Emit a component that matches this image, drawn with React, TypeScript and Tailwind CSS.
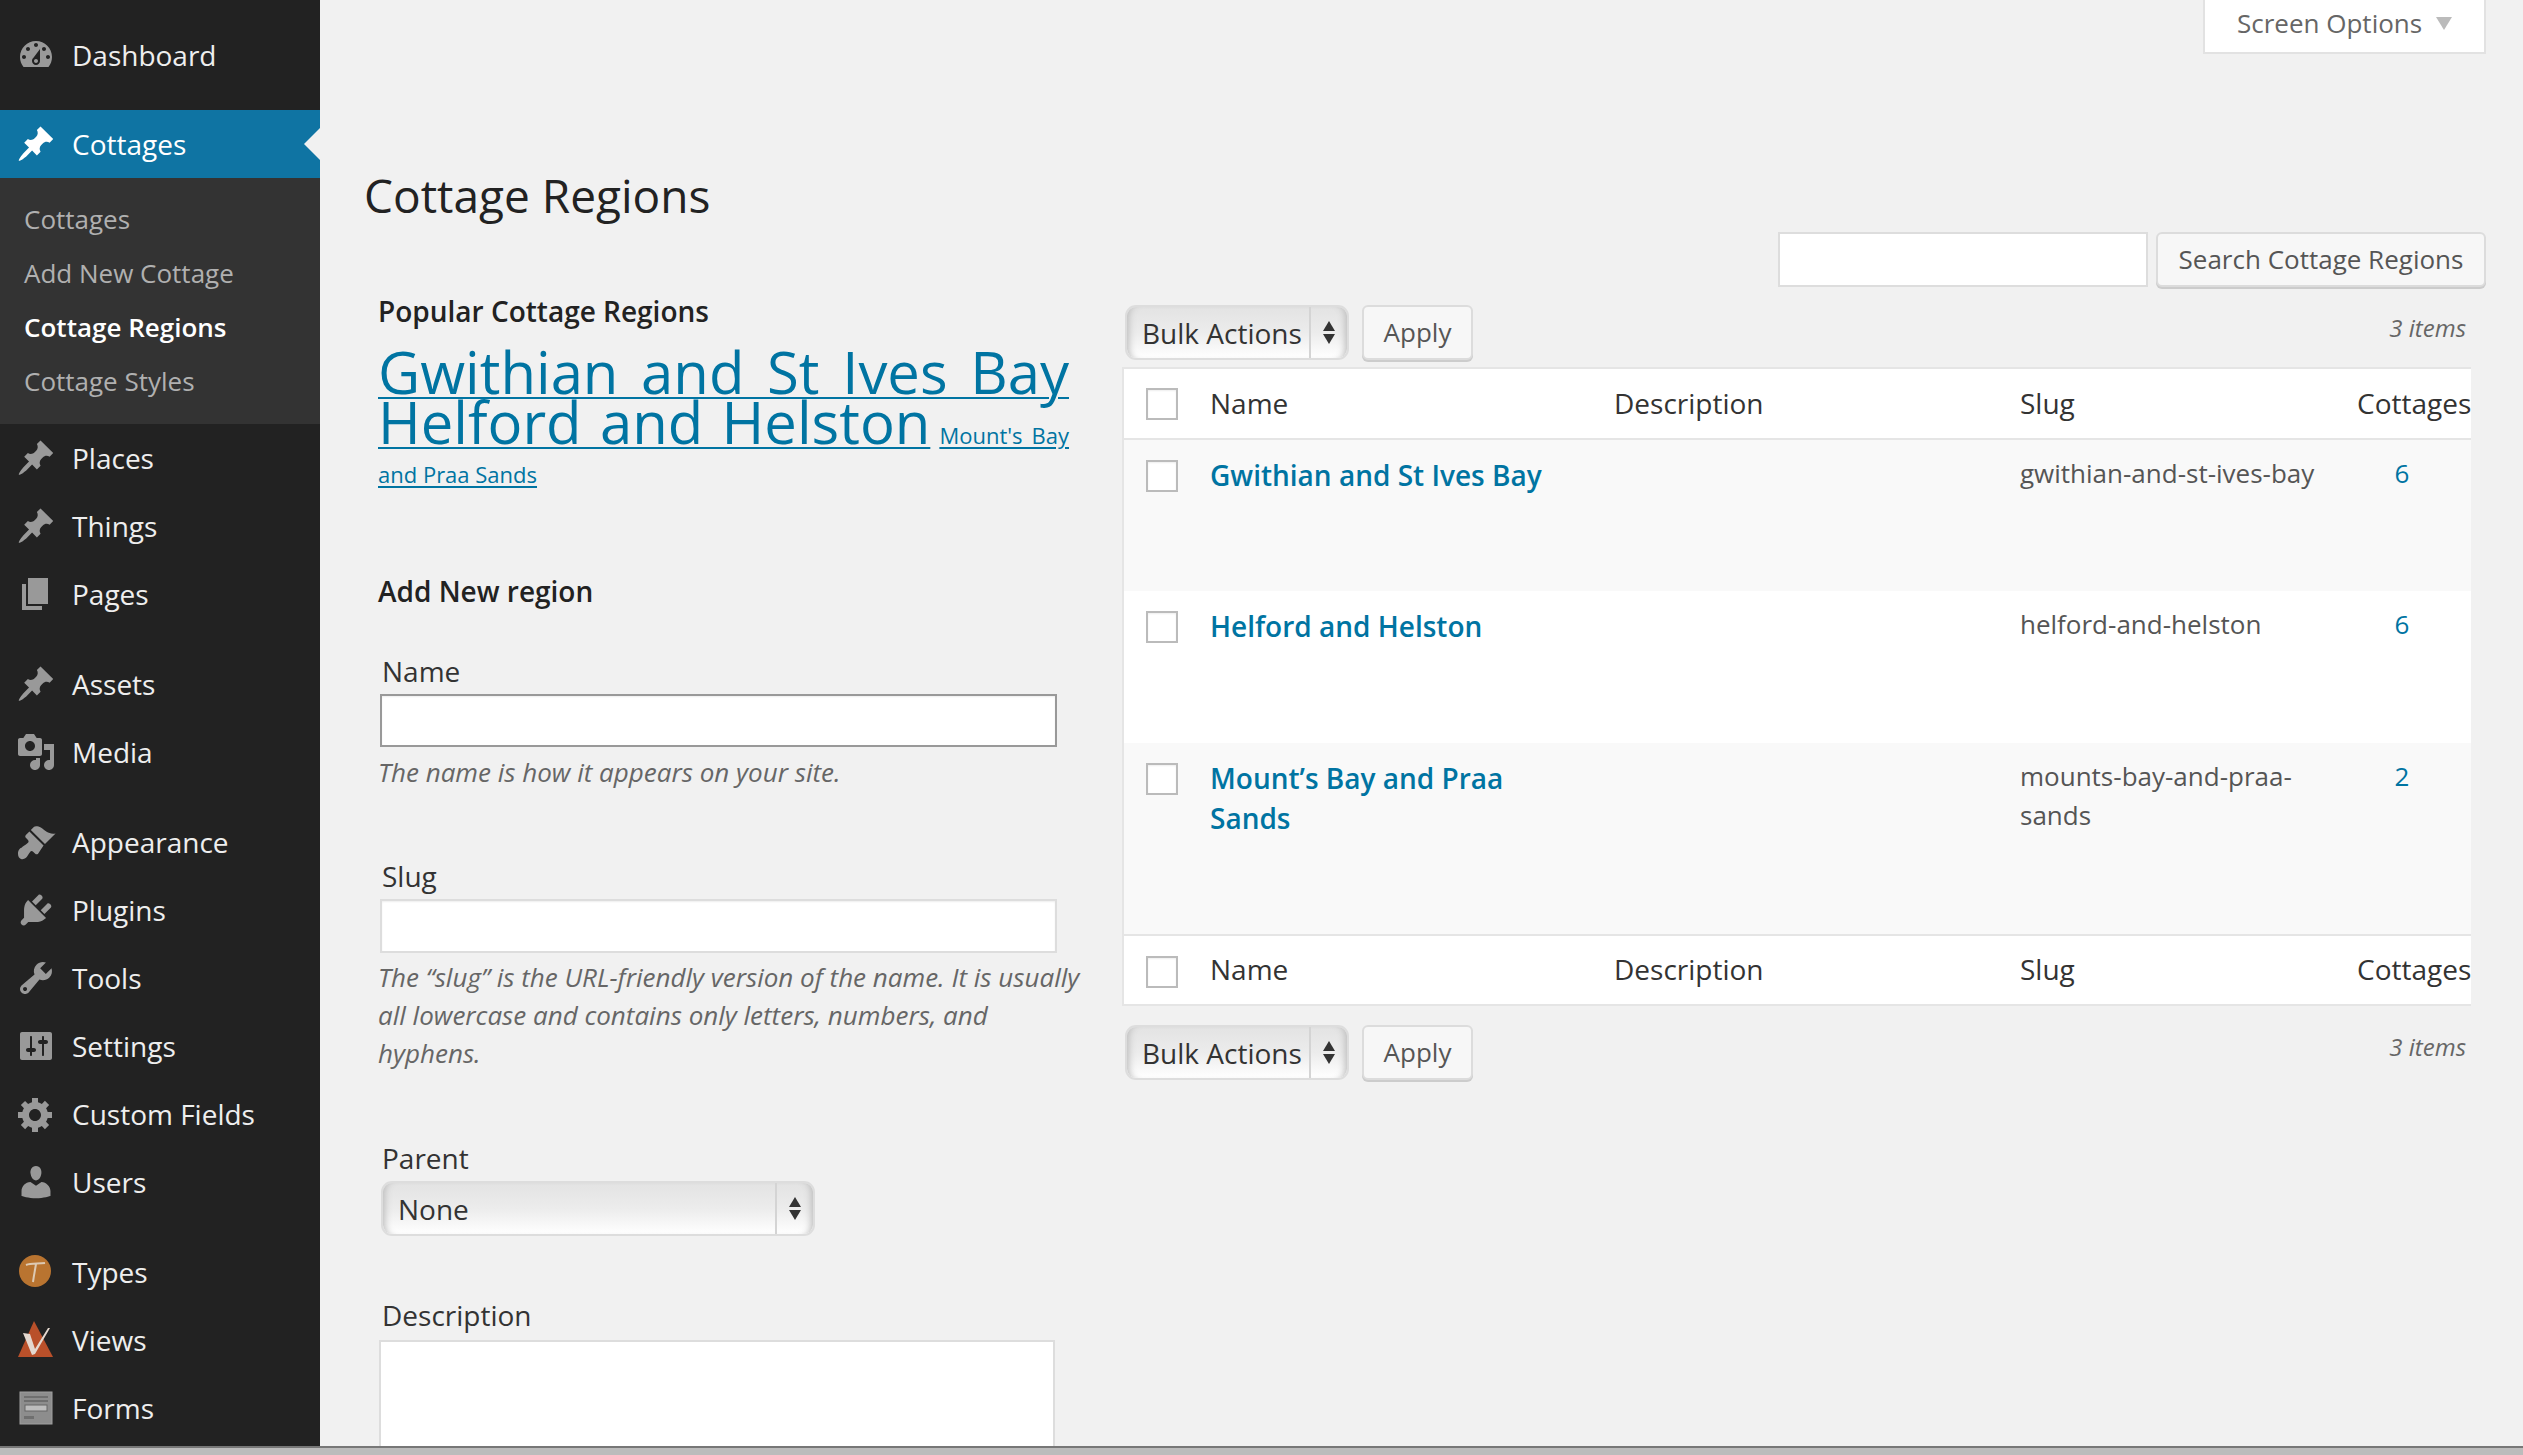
import React from "react";

const pin = "M10.44 3.02l1.82-1.82 6.36 6.35-1.83 1.82c-1.05-.68-2.48-.57-3.41.36l-.75.75c-.92.93-1.04 2.35-.35 3.41l-1.83 1.82-2.41-2.41-2.8 2.79c-.42.42-3.38 2.71-3.8 2.29s1.86-3.39 2.28-3.81l2.79-2.79L4.1 9.36l1.83-1.82c1.05.69 2.48.57 3.4-.36l.75-.75c.93-.92 1.05-2.35.36-3.41z";
const P: Record<string, string> = {
  dashboard: "M3.76 16h12.48c1.1-1.37 1.76-3.11 1.76-5 0-4.42-3.58-8-8-8s-8 3.58-8 8c0 1.89.66 3.63 1.76 5zM10 4c.55 0 1 .45 1 1s-.45 1-1 1-1-.45-1-1 .45-1 1-1zM6 6c.55 0 1 .45 1 1s-.45 1-1 1-1-.45-1-1 .45-1 1-1zm8 0c.55 0 1 .45 1 1s-.45 1-1 1-1-.45-1-1 .45-1 1-1zm-5.37 5.55L12 7v6c0 1.1-.9 2-2 2s-2-.9-2-2c0-.57.24-1.08.63-1.45zM4 10c.55 0 1 .45 1 1s-.45 1-1 1-1-.45-1-1 .45-1 1-1zm12 0c.55 0 1 .45 1 1s-.45 1-1 1-1-.45-1-1 .45-1 1-1zm-5 3c0-.55-.45-1-1-1s-1 .45-1 1 .45 1 1 1 1-.45 1-1z",
  pin,
  page: "M6 15V2h10v13H6zm-1 1h8v2H3V5h2v11z",
  media: "M13 11V4c0-.55-.45-1-1-1h-1.67L9 1H5L3.67 3H2c-.55 0-1 .45-1 1v7c0 .55.45 1 1 1h10c.55 0 1-.45 1-1zM7 4.5c1.38 0 2.5 1.12 2.5 2.5S8.38 9.5 7 9.5 4.5 8.38 4.5 7 5.62 4.5 7 4.5zM14 6h5v10.5c0 1.38-1.12 2.5-2.5 2.5S14 17.88 14 16.5s1.12-2.5 2.5-2.5c.17 0 .34.02.5.05V9h-3V6zm-4 8.05V13h2v3.5c0 1.38-1.12 2.5-2.5 2.5S7 17.88 7 16.5 8.12 14 9.5 14c.17 0 .34.02.5.05z",
  appearance: "M14.48 11.06L7.41 3.99l1.5-1.5c.5-.56 2.3-.47 3.51.32 1.21.8 1.43 1.28 2.91 2.1 1.18.64 2.45 1.26 4.45.85zm-.71.71L6.7 4.7 4.93 6.47c-.39.39-.39 1.02 0 1.41l1.06 1.06c.39.39.39 1.03 0 1.42-.6.6-1.43 1.11-2.21 1.69-.35.26-.7.53-1.01.84C1.43 13.23.99 14.8 1 15.98c.02 1.2.61 2.27 1.5 2.5 1.69.43 2.83-.74 3.22-1.44.44-.78.99-1.62 1.41-2.21.39-.38 1.02-.38 1.41 0l1.07 1.06c.39.39 1.02.39 1.41 0z",
  plugins: "M13.11 4.36L9.87 7.6 8 5.73l3.24-3.24c.35-.34 1.05-.2 1.56.32.52.51.66 1.21.31 1.55zm-8 1.77l.91-1.12 9.01 9.01-1.19.84c-.71.71-2.63 1.16-3.82 1.16H6.14L4.9 17.26c-.59.59-1.54.59-2.12 0-.59-.58-.59-1.53 0-2.12l1.24-1.24v-3.88c0-1.13.4-3.19 1.09-3.89zm7.26 3.97l3.24-3.24c.34-.35 1.04-.21 1.55.31.52.51.66 1.21.31 1.55l-3.24 3.25z",
  tools: "M16.68 9.77c-1.34 1.34-3.3 1.67-4.95.99l-5.41 6.52c-.99.99-2.59.99-3.58 0s-.99-2.59 0-3.57l6.52-5.42c-.68-1.65-.35-3.61.99-4.95 1.28-1.28 3.12-1.62 4.72-1.06l-2.89 2.89 2.82 2.82 2.86-2.87c.53 1.58.18 3.39-1.08 4.65zM3.81 16.21c.4.39 1.04.39 1.43 0 .4-.4.4-1.04 0-1.43-.39-.4-1.03-.4-1.43 0-.39.39-.39 1.03 0 1.43z",
  settings: "M18 16V4c0-.55-.45-1-1-1H3c-.55 0-1 .45-1 1v12c0 .55.45 1 1 1h14c.55 0 1-.45 1-1zM8 11h1c.55 0 1 .45 1 1s-.45 1-1 1H8v1.5c0 .28-.22.5-.5.5s-.5-.22-.5-.5V13H6c-.55 0-1-.45-1-1s.45-1 1-1h1V5.5c0-.28.22-.5.5-.5s.5.22.5.5V11zm5-2h-1c-.55 0-1-.45-1-1s.45-1 1-1h1V5.5c0-.28.22-.5.5-.5s.5.22.5.5V7h1c.55 0 1 .45 1 1s-.45 1-1 1h-1v5.5c0 .28-.22.5-.5.5s-.5-.22-.5-.5V9z",
  gear: "M18 12h-2.18c-.17.7-.44 1.35-.81 1.93l1.54 1.54-2.1 2.1-1.54-1.54c-.58.36-1.23.63-1.91.79V19H8v-2.18c-.68-.16-1.33-.43-1.91-.79l-1.54 1.54-2.12-2.12 1.54-1.54c-.36-.58-.63-1.23-.79-1.91H1V9.03h2.17c.16-.7.44-1.35.8-1.94L2.43 5.55l2.1-2.1 1.54 1.54c.58-.37 1.24-.64 1.93-.81V2h3v2.18c.68.16 1.33.43 1.91.79l1.54-1.54 2.12 2.12-1.54 1.54c.36.59.64 1.24.8 1.94H18V12zm-8.5 1.5c1.66 0 3-1.34 3-3s-1.34-3-3-3-3 1.34-3 3 1.34 3 3 3z",
  users: "M10 9.25c-2.27 0-2.73-3.44-2.73-3.44C7 4.02 7.82 2 9.97 2c2.16 0 2.98 2.02 2.71 3.81 0 0-.41 3.44-2.68 3.44zm0 2.57L12.72 10c2.39 0 4.52 2.33 4.52 4.53v2.49s-3.65 1.13-7.24 1.13c-3.65 0-7.24-1.13-7.24-1.13v-2.49c0-2.25 1.94-4.48 4.47-4.48z",
};

function Icon({ name, white }: { name: string; white?: boolean }) {
  if (name === "types")
    return (
      <svg viewBox="0 0 40 40" className="h-10 w-10 shrink-0">
        <circle cx="19" cy="19" r="16" fill="#b97430" />
        <path d="M10 13c5-2 12-1 19-2M20 12c-1 6-2 11-3 18" fill="none" stroke="#ddc9b2" strokeWidth="2" />
      </svg>
    );
  if (name === "views")
    return (
      <svg viewBox="0 0 40 40" className="h-10 w-10 shrink-0">
        <path d="M18 1L37 37H2z" fill="#b9502a" />
        <path d="M7 13l9 22 3-1 15-26-2 0-13 21-5-15z" fill="#e4d8cf" />
      </svg>
    );
  if (name === "forms")
    return (
      <svg viewBox="0 0 40 40" className="h-10 w-10 shrink-0">
        <rect x="4" y="4" width="32" height="32" fill="#8d8d8d" stroke="#9f9f9f" strokeWidth="1" />
        <path d="M8 8h24v2H8zM8 12h24v2H8z" fill="#6f6f6f" />
        <rect x="9" y="17" width="22" height="6" fill="#bdbdbd" stroke="#666" />
        <path d="M8 28h10v3H8z" fill="#6f6f6f" />
      </svg>
    );
  return (
    <svg viewBox="0 0 20 20" className="h-10 w-10 shrink-0" fill={white ? "#ffffff" : "#999999"}>
      <path fillRule="evenodd" d={P[name]} />
    </svg>
  );
}

function MenuItem({ icon, label }: { icon: string; label: string }) {
  return (
    <div className="flex h-[68px] items-center pl-4 text-[28px] text-[#eeeeee]">
      <Icon name={icon} />
      <span className="ml-4">{label}</span>
    </div>
  );
}

function Sidebar() {
  return (
    <aside className="w-[320px] shrink-0 bg-[#222222] pt-[21px]">
      <MenuItem icon="dashboard" label="Dashboard" />
      <div className="relative mt-[21px] flex h-[68px] items-center bg-[#0f74a3] pl-4 text-[28px] text-white">
        <Icon name="pin" white />
        <span className="ml-4">Cottages</span>
        <div className="absolute right-0 top-[18px] h-0 w-0 border-y-[16px] border-r-[16px] border-y-transparent border-r-[#f1f1f1]" />
      </div>
      <div className="bg-[#333333] pb-[16px] pl-6 pt-[14px] text-[26px] text-[#b0b0b0]">
        <div className="flex h-[54px] items-center">Cottages</div>
        <div className="flex h-[54px] items-center">Add New Cottage</div>
        <div className="flex h-[54px] items-center font-semibold text-white">Cottage Regions</div>
        <div className="flex h-[54px] items-center">Cottage Styles</div>
      </div>
      <MenuItem icon="pin" label="Places" />
      <MenuItem icon="pin" label="Things" />
      <MenuItem icon="page" label="Pages" />
      <div className="h-[22px]" />
      <MenuItem icon="pin" label="Assets" />
      <MenuItem icon="media" label="Media" />
      <div className="h-[22px]" />
      <MenuItem icon="appearance" label="Appearance" />
      <MenuItem icon="plugins" label="Plugins" />
      <MenuItem icon="tools" label="Tools" />
      <MenuItem icon="settings" label="Settings" />
      <MenuItem icon="gear" label="Custom Fields" />
      <MenuItem icon="users" label="Users" />
      <div className="h-[22px]" />
      <MenuItem icon="types" label="Types" />
      <MenuItem icon="views" label="Views" />
      <MenuItem icon="forms" label="Forms" />
    </aside>
  );
}

function SelectBox({ label, widthClass }: { label: string; widthClass: string }) {
  return (
    <div className={`flex h-[55px] items-stretch overflow-hidden rounded-[11px] border-2 border-[#dddddd] bg-linear-to-b from-[#e3e3e3] via-[#ececec] to-white text-[28px] text-[#333333] shadow-[inset_8px_0_7px_-6px_#bdbdbd,inset_-8px_0_7px_-6px_#bdbdbd] ${widthClass}`}>
      <div className="flex flex-1 items-center pl-[15px]">{label}</div>
      <div className="flex w-[38px] flex-col items-center justify-center gap-[3px] border-l-2 border-[#d4d4d4]">
        <div className="h-0 w-0 border-x-[6px] border-b-[10px] border-x-transparent border-b-[#333333]" />
        <div className="h-0 w-0 border-x-[6px] border-t-[10px] border-x-transparent border-t-[#333333]" />
      </div>
    </div>
  );
}

function Button({ label, className }: { label: string; className: string }) {
  return (
    <div className={`flex items-center justify-center rounded-[6px] border-2 border-[#dcdcdc] bg-[#f7f7f7] text-[26px] text-[#555555] shadow-[0_2px_0_#cccccc] ${className}`}>
      {label}
    </div>
  );
}

function Toolbar({ itemsClass }: { itemsClass: string }) {
  return (
    <div className="flex items-start pl-[3px] pr-[5px]">
      <SelectBox label="Bulk Actions" widthClass="w-[224px]" />
      <Button label="Apply" className="ml-[13px] h-[55px] w-[111px]" />
      <span className={`ml-auto text-[24px] italic text-[#666666] ${itemsClass}`}>3 items</span>
    </div>
  );
}

function Check() {
  return <div className="h-8 w-8 border-2 border-[#bbbbbb] bg-white shadow-[inset_0_1px_2px_rgba(0,0,0,0.07)]" />;
}

function HeadRow({ foot }: { foot?: boolean }) {
  const cell = `p-0 text-left align-middle font-normal ${foot ? "h-[69px] border-t-2 border-[#e5e5e5]" : "h-[70px] border-b-2 border-[#e5e5e5]"}`;
  const text = `${cell} pb-[2px]`;
  return (
    <tr className="bg-white text-[28px] text-[#333333]">
      <th className={`${cell} pl-[22px] ${foot ? "pt-1" : ""}`}><Check /></th>
      <th className={text}>Name</th>
      <th className={text}>Description</th>
      <th className={text}>Slug</th>
      <th className={`${text} overflow-hidden whitespace-nowrap`}>Cottages</th>
    </tr>
  );
}

const rows = [
  { name: "Gwithian and St Ives Bay", slug: "gwithian-and-st-ives-bay", n: "6", h: "h-[152px]", bg: "bg-[#f9f9f9]" },
  { name: "Helford and Helston", slug: "helford-and-helston", n: "6", h: "h-[152px]", bg: "bg-white" },
  { name: "Mount’s Bay and Praa Sands", slug: "mounts-bay-and-praa-sands", n: "2", h: "h-[192px]", bg: "bg-[#f9f9f9]" },
];

function Table() {
  return (
    <div className="border-y-2 border-l-2 border-[#e5e5e5]">
      <table className="w-full table-fixed border-collapse">
        <colgroup>
          <col className="w-[86px]" />
          <col className="w-[404px]" />
          <col className="w-[406px]" />
          <col className="w-[337px]" />
          <col className="w-[114px]" />
        </colgroup>
        <thead><HeadRow /></thead>
        <tbody>
          {rows.map((r) => (
            <tr key={r.slug} className={`${r.h} ${r.bg} align-top`}>
              <td className="pl-[22px] pt-5"><Check /></td>
              <td className="pr-[30px] pt-[15px] text-[28px] font-semibold leading-[40px] text-[#0074a2]">{r.name}</td>
              <td />
              <td className="pr-5 pt-[14px] text-[26px] leading-[39px] text-[#555555]">{r.slug}</td>
              <td className="pr-6 pt-[14px] text-center text-[26px] leading-[39px] text-[#0074a2]">{r.n}</td>
            </tr>
          ))}
        </tbody>
        <tfoot><HeadRow foot /></tfoot>
      </table>
    </div>
  );
}

function LeftColumn() {
  return (
    <div className="ml-[58px] w-[704px] shrink-0 text-[28px] text-[#333333]">
      <h3 className="mt-1 text-[28px] font-semibold leading-[40px] text-[#222222]">Popular Cottage Regions</h3>
      <div className="mt-6 w-[691px] text-justify text-[22px] leading-[39px] text-[#0074a2]">
        <a className="text-[58px] leading-[34px] underline decoration-2 underline-offset-[3px]">Gwithian and St Ives Bay</a>{" "}
        <a className="text-[58px] leading-[34px] underline decoration-2 underline-offset-[3px]">Helford and Helston</a>{" "}
        <a className="underline underline-offset-[3px]">Mount's Bay and Praa Sands</a>
      </div>
      <h3 className="mt-[77px] font-semibold leading-[40px] text-[#222222]">Add New region</h3>
      <label className="ml-1 mt-[40px] block leading-[40px]">Name</label>
      <div className="ml-[2px] mt-[3px] h-[53px] w-[677px] border-2 border-[#999999] bg-white shadow-[inset_0_1px_2px_rgba(0,0,0,0.07)]" />
      <p className="mt-[6px] text-[26px] italic leading-[38px] text-[#666666]">The name is how it appears on your site.</p>
      <label className="ml-1 mt-[65px] block leading-[40px]">Slug</label>
      <div className="ml-[2px] mt-[3px] h-[54px] w-[677px] border-2 border-[#dddddd] bg-white shadow-[inset_0_1px_2px_rgba(0,0,0,0.07)]" />
      <p className="mt-[5px] text-[26px] italic leading-[38px] text-[#666666]">The “slug” is the URL-friendly version of the name. It is usually all lowercase and contains only letters, numbers, and hyphens.</p>
      <label className="ml-1 mt-[66px] block leading-[40px]">Parent</label>
      <div className="ml-[3px] mt-[3px]">
        <SelectBox label="None" widthClass="w-[434px]" />
      </div>
      <label className="ml-1 mt-[59px] block leading-[40px]">Description</label>
      <div className="ml-px mt-[5px] h-[200px] w-[676px] border-2 border-[#dddddd] bg-white" />
    </div>
  );
}

export default function App() {
  return (
    <div className="flex h-screen flex-col overflow-hidden bg-[#f1f1f1] font-['Open_Sans',sans-serif]">
      <div className="flex min-h-0 flex-1">
        <Sidebar />
        <main className="min-w-0 flex-1 pr-[37px]">
          <div className="flex justify-end">
            <div className="flex h-[54px] w-[283px] items-center border-x-2 border-b-2 border-[#e2e2e2] bg-white pb-[5px] pl-[32px] text-[26px] text-[#666666]">
              Screen Options
              <div className="ml-[14px] h-0 w-0 border-x-[8px] border-t-[13px] border-x-transparent border-t-[#bbbbbb]" />
            </div>
          </div>
          <h1 className="ml-[44px] mt-[111px] text-[46px] font-normal leading-[60px] text-[#222222]">Cottage Regions</h1>
          <div className="mt-[7px] flex justify-end gap-2">
            <div className="h-[55px] w-[370px] border-2 border-[#dddddd] bg-white" />
            <Button label="Search Cottage Regions" className="h-[55px] w-[330px]" />
          </div>
          <div className="flex items-start">
            <LeftColumn />
            <div className="ml-10 w-[1349px] shrink-0 pt-[18px]">
              <Toolbar itemsClass="mt-[5px]" />
              <div className="mt-[7px]"><Table /></div>
              <div className="mt-[19px]"><Toolbar itemsClass="mt-1" /></div>
            </div>
          </div>
        </main>
      </div>
      <div className="relative z-10 h-[9px] shrink-0 border-t-2 border-[#777777] bg-[#bcbcbc]" />
    </div>
  );
}
